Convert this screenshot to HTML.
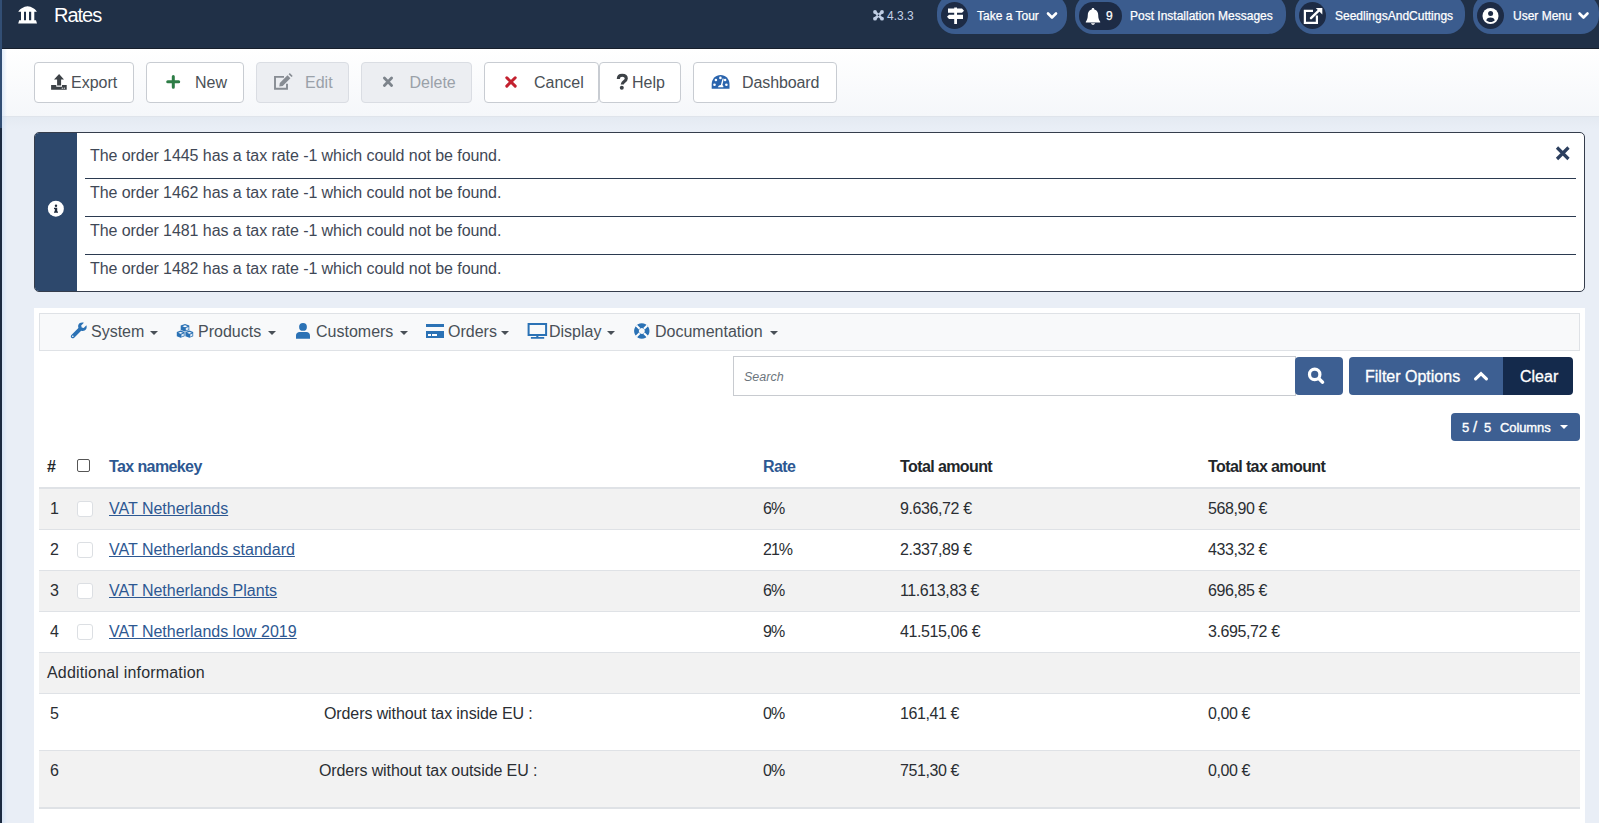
<!DOCTYPE html>
<html><head><meta charset="utf-8">
<style>
*{box-sizing:border-box;margin:0;padding:0}
html,body{width:1599px;height:823px;overflow:hidden}
body{position:relative;background:#e9eef6;font-family:"Liberation Sans",sans-serif;color:#22262a}
.abs{position:absolute}
svg{position:absolute;left:0;top:0;overflow:visible}
#header{left:0;top:0;width:1599px;height:49px;background:#203047;border-bottom:1px solid #171f2c}
.hdtxt{color:#fff;font-size:20px;line-height:24px;white-space:nowrap}
.pill{position:absolute;top:-6px;height:39.7px;border-radius:18px;background:#3b5c8e}
.circ{position:absolute;width:27px;height:27px;border-radius:50%;background:#1d2b45;top:2px}
.ptxt{position:absolute;color:#fff;font-size:12px;line-height:16px;top:8px;white-space:nowrap;-webkit-text-stroke:0.25px #fff}
#toolbar{left:0;top:49px;width:1599px;height:68px;background:linear-gradient(#fff,#f5f7fa);border-bottom:1px solid #dfe4eb}
#tbshadow{left:0;top:117px;width:1599px;height:12px;background:linear-gradient(#e4eaf2,#e9eef6)}
#strip{left:0;top:0;width:2px;height:823px;background:#1c2a40}
#strip2{left:0;top:0;width:2px;height:128px;background:#324e74}
#glow{left:2px;top:49px;width:5px;height:774px;background:linear-gradient(90deg,rgba(200,220,245,.55),rgba(200,220,245,0))}
.btn{position:absolute;top:62px;height:41px;border:1px solid #c8ccd2;border-radius:4px;background:#fff;color:#4a5056;font-size:16px;line-height:39px;white-space:nowrap}
.btn.dis{background:#eceef2;border-color:#dadde3;color:#9aa1a9}
.btn span{position:absolute;top:0}
#alert{left:34px;top:132px;width:1551px;height:160px;border:1px solid #353d4c;border-radius:5px;background:#fff;overflow:hidden}
#alertside{left:0;top:0;width:42px;height:158px;background:#2d486c}
.amsg{position:absolute;left:55px;font-size:16px;color:#3f4856;white-space:nowrap;line-height:20px;letter-spacing:-0.07px}
.asep{position:absolute;left:50px;width:1491px;height:1px;background:#2b3a50}
#panel{left:34px;top:308px;width:1551px;height:515px;background:#fff}
#menubar{left:39px;top:313px;width:1541px;height:38px;background:#f8f9fa;border:1px solid #dfe2e6}
.mi{position:absolute;top:322px;font-size:16px;line-height:20px;color:#495057;white-space:nowrap}
.caret{position:absolute;top:331px;width:0;height:0;border-left:4px solid transparent;border-right:4px solid transparent;border-top:4px solid #495057}
#search{left:733px;top:356px;width:563px;height:40px;border:1px solid #c8cbd0;background:#fff}
#search span{position:absolute;left:10px;top:13px;font-size:12.5px;line-height:15px;font-style:italic;color:#6c757d}
.bbtn{position:absolute;background:#3d5f92;color:#fff;font-size:16px;line-height:20px;white-space:nowrap}
.th{position:absolute;top:457px;font-size:16px;font-weight:bold;line-height:20px;white-space:nowrap;color:#22262a;letter-spacing:-0.6px}
.th.link{color:#2d5892}
.row{position:absolute;left:39px;width:1541px;border-bottom:1px solid #dfe2e6}
.row.g{background:#f2f2f2}
.td{position:absolute;font-size:16px;line-height:20px;white-space:nowrap;color:#2a2e33}
.td a{color:#2d5892;text-decoration:underline}
.td.n{letter-spacing:-0.4px}
.td.pc{letter-spacing:-1px}
.cb{position:absolute;left:77px;width:16px;height:16px;border:1px solid #dcdfe3;border-radius:3px;background:#fff}
</style></head><body>
<div id="header" class="abs"></div>
<div id="toolbar" class="abs"></div><div id="tbshadow" class="abs"></div>
<div id="strip" class="abs"></div>
<div id="strip2" class="abs"></div><div id="glow" class="abs"></div>
<div class="hdtxt abs" style="left:54px;top:3px;letter-spacing:-1px">Rates</div>
<div class="abs" style="left:887px;top:8px;font-size:12px;line-height:16px;color:#c3d0e6">4.3.3</div>
<!-- pills -->
<div class="pill" style="left:937px;width:130px"></div>
<div class="circ" style="left:941px"></div>
<div class="ptxt" style="left:977px">Take a Tour</div>
<div class="pill" style="left:1075px;width:211px"></div>
<div class="abs" style="left:1079px;top:2px;width:43px;height:28px;border-radius:14px;background:#1d2b45"></div>
<div class="ptxt" style="left:1106px">9</div>
<div class="ptxt" style="left:1130px">Post Installation Messages</div>
<div class="pill" style="left:1295px;width:170px"></div>
<div class="circ" style="left:1299px"></div>
<div class="ptxt" style="left:1335px">SeedlingsAndCuttings</div>
<div class="pill" style="left:1473px;width:125.5px"></div>
<div class="circ" style="left:1477px"></div>
<div class="ptxt" style="left:1513px">User Menu</div>

<div class="btn" style="left:34px;width:100px"><span style="left:36px">Export</span></div>
<div class="btn" style="left:146px;width:98px"><span style="left:48px">New</span></div>
<div class="btn dis" style="left:256px;width:93px"><span style="left:48px">Edit</span></div>
<div class="btn dis" style="left:361px;width:111px"><span style="left:47.5px">Delete</span></div>
<div class="btn" style="left:484px;width:115px"><span style="left:49px">Cancel</span></div>
<div class="btn" style="left:599px;width:82px"><span style="left:32px">Help</span></div>
<div class="btn" style="left:693px;width:144px"><span style="left:48px;letter-spacing:-0.1px">Dashboard</span></div>

<div id="alert" class="abs">
  <div id="alertside" class="abs"></div>
  <div class="amsg" style="top:13px">The order 1445 has a tax rate -1 which could not be found.</div>
  <div class="asep" style="top:45px"></div>
  <div class="amsg" style="top:50px">The order 1462 has a tax rate -1 which could not be found.</div>
  <div class="asep" style="top:83px"></div>
  <div class="amsg" style="top:88px">The order 1481 has a tax rate -1 which could not be found.</div>
  <div class="asep" style="top:121px"></div>
  <div class="amsg" style="top:126px">The order 1482 has a tax rate -1 which could not be found.</div>
</div>

<div id="panel" class="abs"></div>
<div id="menubar" class="abs"></div>
<div class="mi" style="left:91px">System</div>
<div class="mi" style="left:198px">Products</div>
<div class="mi" style="left:316px">Customers</div>
<div class="mi" style="left:448px">Orders</div>
<div class="mi" style="left:549px">Display</div>
<div class="mi" style="left:655px">Documentation</div>
<div class="caret" style="left:150px"></div>
<div class="caret" style="left:268px"></div>
<div class="caret" style="left:400px"></div>
<div class="caret" style="left:501px"></div>
<div class="caret" style="left:607px"></div>
<div class="caret" style="left:770px"></div>

<div id="search" class="abs"><span>Search</span></div>
<div class="bbtn" style="left:1295px;top:357px;width:48px;height:38px;border-radius:4px"></div>
<div class="bbtn" style="left:1349px;top:357px;width:155px;height:38px;border-radius:4px 0 0 4px"><span class="abs" style="left:16px;top:10px;-webkit-text-stroke:0.3px #fff">Filter Options</span></div>
<div class="bbtn" style="left:1503px;top:357px;width:70px;height:38px;border-radius:0 4px 4px 0;background:#142a4c"><span class="abs" style="left:17px;top:10px;-webkit-text-stroke:0.3px #fff">Clear</span></div>
<div class="bbtn" style="left:1451px;top:413px;width:129px;height:28px;border-radius:4px;font-size:13px;-webkit-text-stroke:0.35px #fff"><span class="abs" style="left:11px;top:5px">5</span><span class="abs" style="left:22px;top:4px;font-size:15px">/</span><span class="abs" style="left:33px;top:5px">5</span><span class="abs" style="left:49px;top:5px;letter-spacing:-0.1px">Columns</span></div>

<div class="th" style="left:47px">#</div>
<div class="abs" style="left:77px;top:459px;width:13px;height:13px;border:1px solid #555;border-radius:2px;background:#fff"></div>
<div class="th link" style="left:109px">Tax namekey</div>
<div class="th link" style="left:763px">Rate</div>
<div class="th" style="left:900px">Total amount</div>
<div class="th" style="left:1208px">Total tax amount</div>
<div class="abs" style="left:39px;top:487px;width:1541px;height:2px;background:#dfe2e6"></div>

<div class="row g" style="top:489px;height:41px"></div>
<div class="row" style="top:530px;height:41px"></div>
<div class="row g" style="top:571px;height:41px"></div>
<div class="row" style="top:612px;height:41px"></div>
<div class="row g" style="top:653px;height:41px"></div>
<div class="row" style="top:694px;height:57px"></div>
<div class="row g" style="top:751px;height:58px;border-bottom-width:2px"></div>

<div class="td" style="left:50px;top:499px">1</div><div class="cb" style="top:501px"></div>
<div class="td" style="left:109px;top:499px"><a>VAT Netherlands</a></div>
<div class="td pc" style="left:763px;top:499px">6%</div>
<div class="td n" style="left:900px;top:499px">9.636,72 €</div>
<div class="td n" style="left:1208px;top:499px">568,90 €</div>

<div class="td" style="left:50px;top:540px">2</div><div class="cb" style="top:542px"></div>
<div class="td" style="left:109px;top:540px"><a>VAT Netherlands standard</a></div>
<div class="td pc" style="left:763px;top:540px">21%</div>
<div class="td n" style="left:900px;top:540px">2.337,89 €</div>
<div class="td n" style="left:1208px;top:540px">433,32 €</div>

<div class="td" style="left:50px;top:581px">3</div><div class="cb" style="top:583px"></div>
<div class="td" style="left:109px;top:581px"><a>VAT Netherlands Plants</a></div>
<div class="td pc" style="left:763px;top:581px">6%</div>
<div class="td n" style="left:900px;top:581px">11.613,83 €</div>
<div class="td n" style="left:1208px;top:581px">696,85 €</div>

<div class="td" style="left:50px;top:622px">4</div><div class="cb" style="top:624px"></div>
<div class="td" style="left:109px;top:622px"><a>VAT Netherlands low 2019</a></div>
<div class="td pc" style="left:763px;top:622px">9%</div>
<div class="td n" style="left:900px;top:622px">41.515,06 €</div>
<div class="td n" style="left:1208px;top:622px">3.695,72 €</div>

<div class="td" style="left:47px;top:663px;letter-spacing:0.18px">Additional information</div>

<div class="td" style="left:50px;top:704px">5</div>
<div class="td" style="left:324px;top:704px;letter-spacing:-0.1px">Orders without tax inside EU :</div>
<div class="td pc" style="left:763px;top:704px">0%</div>
<div class="td n" style="left:900px;top:704px">161,41 €</div>
<div class="td n" style="left:1208px;top:704px">0,00 €</div>

<div class="td" style="left:50px;top:761px">6</div>
<div class="td" style="left:319px;top:761px;letter-spacing:-0.1px">Orders without tax outside EU :</div>
<div class="td pc" style="left:763px;top:761px">0%</div>
<div class="td n" style="left:900px;top:761px">751,30 €</div>
<div class="td n" style="left:1208px;top:761px">0,00 €</div>

<!-- ICONS (body coordinates) -->
<svg width="1599" height="823" viewBox="0 0 1599 823">
  <!-- bank -->
  <path fill="#fff" d="M18.3 11.8 C19 9.4 24 6.2 27.6 6.2 C31.2 6.2 36.2 9.4 36.9 11.8 Z M21 11.8h3v8.6h-3z M26 11.8h3v8.6h-3z M31.2 11.8h3.1v8.6h-3.1z M19.2 20.3 H36 L37 23.4 H18.2 Z"/>
  <!-- joomla mini -->
  <g fill="#bfcde3"><circle cx="875" cy="12" r="1.9"/><circle cx="882" cy="12" r="1.9"/><circle cx="875" cy="18.7" r="1.9"/><circle cx="882" cy="18.7" r="1.9"/></g><path d="M875 12 L882 18.7 M882 12 L875 18.7" stroke="#bfcde3" stroke-width="2.6"/><circle cx="878.5" cy="15.35" r="0.8" fill="#203047"/>
  <!-- signs -->
  <path fill="#fff" d="M948 8.5 H962 L964 10.65 L962 12.8 H948 Z M949 14.7 H963 V19 H949 L947 16.85 Z M954.2 7.6 h2.8 v1 h-2.8z M954.2 12.8 h2.8 v1.9 h-2.8z M954.2 19 h2.8 v5 h-2.8z"/>
  <path d="M1048 13.5 L1052 17.5 L1056 13.5" fill="none" stroke="#fff" stroke-width="2.6" stroke-linecap="round" stroke-linejoin="round"/>
  <!-- bell -->
  <path fill="#fff" d="M1093 8 C1094 8 1094.3 8.6 1094.3 9.4 C1097.3 10.2 1098.2 12.5 1098.2 15 C1098.2 18.5 1099 20 1100.2 21.8 V22.6 H1085.8 V21.8 C1087 20 1087.8 18.5 1087.8 15 C1087.8 12.5 1088.7 10.2 1091.7 9.4 C1091.7 8.6 1092 8 1093 8 Z M1091 23.3 H1095 C1095 24.2 1094 24.8 1093 24.8 C1092 24.8 1091 24.2 1091 23.3 Z"/>
  <!-- external link -->
  <path fill="none" stroke="#fff" stroke-width="2.2" d="M1313 10.9 H1304.9 V22.9 H1316.9 V15.5"/>
  <path fill="none" stroke="#fff" stroke-width="2.4" stroke-linecap="round" d="M1311 18.2 L1319.5 9.8"/>
  <path fill="#fff" d="M1315.8 7.9 H1322.3 V14.4 Z"/>
  <!-- user circle -->
  <circle cx="1490.5" cy="16" r="8" fill="#fff"/>
  <circle cx="1490.6" cy="13.6" r="2.5" fill="#1d2b45"/>
  <path fill="#1d2b45" d="M1486.2 20.2 C1487 18.3 1488.5 17.6 1490.5 17.6 C1492.5 17.6 1494 18.3 1494.8 20.2 C1493.7 21.3 1492.2 22 1490.5 22 C1488.8 22 1487.3 21.3 1486.2 20.2 Z"/>
  <path d="M1579.5 13.5 L1583.5 17.5 L1587.5 13.5" fill="none" stroke="#fff" stroke-width="2.6" stroke-linecap="round" stroke-linejoin="round"/>

  <!-- export upload -->
  <path fill="#3d4247" d="M59.1 74.1 L64 79.6 H61.1 V85.4 H57.1 V79.6 H54 Z M51.1 85.1 H56.3 V86.7 H62 V85.1 H66.7 V89.8 H51.1 Z"/>
  <circle cx="62.3" cy="88.2" r="0.6" fill="#fff"/><circle cx="64.3" cy="88.2" r="0.6" fill="#fff"/>
  <!-- plus -->
  <path d="M167.7 81.8 H178.7 M173.3 76.4 V87.3" stroke="#2e7d46" stroke-width="3" stroke-linecap="round"/>
  <!-- edit -->
  <path fill="none" stroke="#878c93" stroke-width="1.9" d="M284 76.9 H275 V88.8 H287 V83.8"/>
  <path fill="#878c93" d="M279.3 86.4 L279.8 83 L287.5 75.3 L290.4 78.2 L282.7 85.9 Z M288.6 74.2 L289.8 73 L292.7 75.9 L291.5 77.1 Z"/>
  <!-- delete x -->
  <path d="M384.4 78.1 L391.6 85.4 M391.6 78.1 L384.4 85.4" stroke="#7d848c" stroke-width="2.8" stroke-linecap="round"/>
  <!-- cancel x -->
  <path d="M506.8 77.8 L515.2 86.1 M515.2 77.8 L506.8 86.1" stroke="#c3212f" stroke-width="3" stroke-linecap="round"/>
  <!-- help ? -->
  <path fill="none" stroke="#3d4247" stroke-width="3.1" d="M618.3 79 C618.3 75.8 620 75.3 622.2 75.3 C624.6 75.3 626.3 76.6 626.3 78.6 C626.3 81.4 622.2 81.6 622.2 84.4"/>
  <circle cx="621.8" cy="87.8" r="2" fill="#3d4247"/>
  <!-- dashboard -->
  <path fill="#2a64ad" d="M711.7 88.8 V84 C711.7 78.9 715.7 75 720.6 75 C725.5 75 729.5 78.9 729.5 84 V88.8 Z"/>
  <g fill="#fff"><circle cx="720.4" cy="77.9" r="1.3"/><circle cx="715.9" cy="80" r="1.3"/><circle cx="725.1" cy="80" r="1.3"/><circle cx="714.5" cy="84.7" r="1.3"/><circle cx="726.4" cy="84.7" r="1.3"/>
  <path d="M722.6 78.4 L723.8 78.7 L722.4 85 C723.2 85.5 723.5 86.3 723.4 87.3 H718 C718 85.9 719.3 85 720.8 84.9 Z"/></g>

  <!-- info -->
  <circle cx="55.85" cy="208.7" r="8" fill="#fff"/>
  <g fill="#1f2a3a"><circle cx="56" cy="205.7" r="1.2"/><path d="M54 207.7 H57.2 V211.5 H58 V212.8 H54 V211.5 H54.8 V209 H54 Z"/></g>
  <!-- close -->
  <path d="M1557 147.5 L1568.5 159 M1568.5 147.5 L1557 159" stroke="#2c3f5e" stroke-width="3.2"/>

  <!-- menubar icons -->
  <g fill="#2b72b5">
    <g transform="translate(-0.6,1.3)"><path d="M72 333.6 L79 326.6 C78.3 324.6 79 322.8 80.4 321.8 C81.6 321 83.2 320.9 84.5 321.4 L81.8 324.1 L82.3 326.1 L84.3 326.6 L87 323.9 C87.5 325.2 87.4 326.8 86.6 328 C85.6 329.4 83.8 330.1 81.8 329.4 L74.8 336.4 C74 337.2 72.8 337.2 72 336.4 C71.2 335.6 71.2 334.4 72 333.6 Z"/><circle cx="73.4" cy="335" r="0.8" fill="#fff"/></g>
    <path d="M185 324 L189.3 325.6 V330 L185 331.6 L180.7 330 V325.6 Z M180.6 330.6 L184.6 332.1 V336.3 L180.6 337.8 L176.8 336.3 V332.1 Z M189.4 330.6 L193.2 332.1 V336.3 L189.4 337.8 L185.4 336.3 V332.1 Z"/>
    <circle cx="303" cy="326.9" r="3.9"/>
    <path d="M296 338.8 V335.5 C296 333.4 297.6 332 299.6 332 H306.4 C308.4 332 310 333.4 310 335.5 V338.8 Z"/>
    <path d="M426 323.9 H444 V326.9 H426 Z M426 331.1 H444 V337.9 H426 Z"/>
    <path d="M527.6 322.9 H547.1 V335.9 H527.6 Z M529.6 324.9 V333.9 H545.1 V324.9 Z M536.3 335.9 H538.4 V337 H536.3 Z M530.9 337 H544.2 V338.8 H530.9 Z" fill-rule="evenodd"/>
    <path d="M641.8 323.3 A7.7 7.7 0 1 1 641.79 323.3 Z M641.8 328 A3 3 0 1 0 641.81 328 Z" fill-rule="evenodd"/>
  </g>
  <g fill="#fff">
    <path d="M182.4 326.2 L185 325.2 L187.6 326.2 L185 327.2 Z M178.2 332.8 L180.6 331.9 L183 332.8 L180.6 333.7 Z M187 332.8 L189.4 331.9 L191.8 332.8 L189.4 333.7 Z"/><path opacity="0.85" d="M185.8 328 L188.5 327 V329.5 L185.8 330.5 Z M181.4 334.5 L183.8 333.6 V335.8 L181.4 336.8 Z M190.2 334.5 L192.4 333.6 V335.8 L190.2 336.8 Z"/>
    <path d="M428 333.9 h3 v2 h-3z M432 333.9 h5 v2 h-5z"/>
  </g>
  <path d="M636.3 325.5 L639.6 328.8 M647.3 325.5 L644 328.8 M636.3 336.5 L639.6 333.2 M647.3 336.5 L644 333.2" stroke="#fff" stroke-width="2"/>

  <!-- search icon -->
  <circle cx="1314.7" cy="374.4" r="5.2" fill="none" stroke="#fff" stroke-width="3.2"/>
  <path d="M1319 378.8 L1322.6 382.2" stroke="#fff" stroke-width="3.4" stroke-linecap="round"/>
  <!-- chevron up -->
  <path d="M1475.6 378.8 L1481 373.6 L1486.4 378.8" fill="none" stroke="#fff" stroke-width="3.2" stroke-linecap="round" stroke-linejoin="miter"/>
  <!-- columns caret -->
  <path d="M1560 425 L1568 425 L1564 429 Z" fill="#fff"/>
</svg>
</body></html>
